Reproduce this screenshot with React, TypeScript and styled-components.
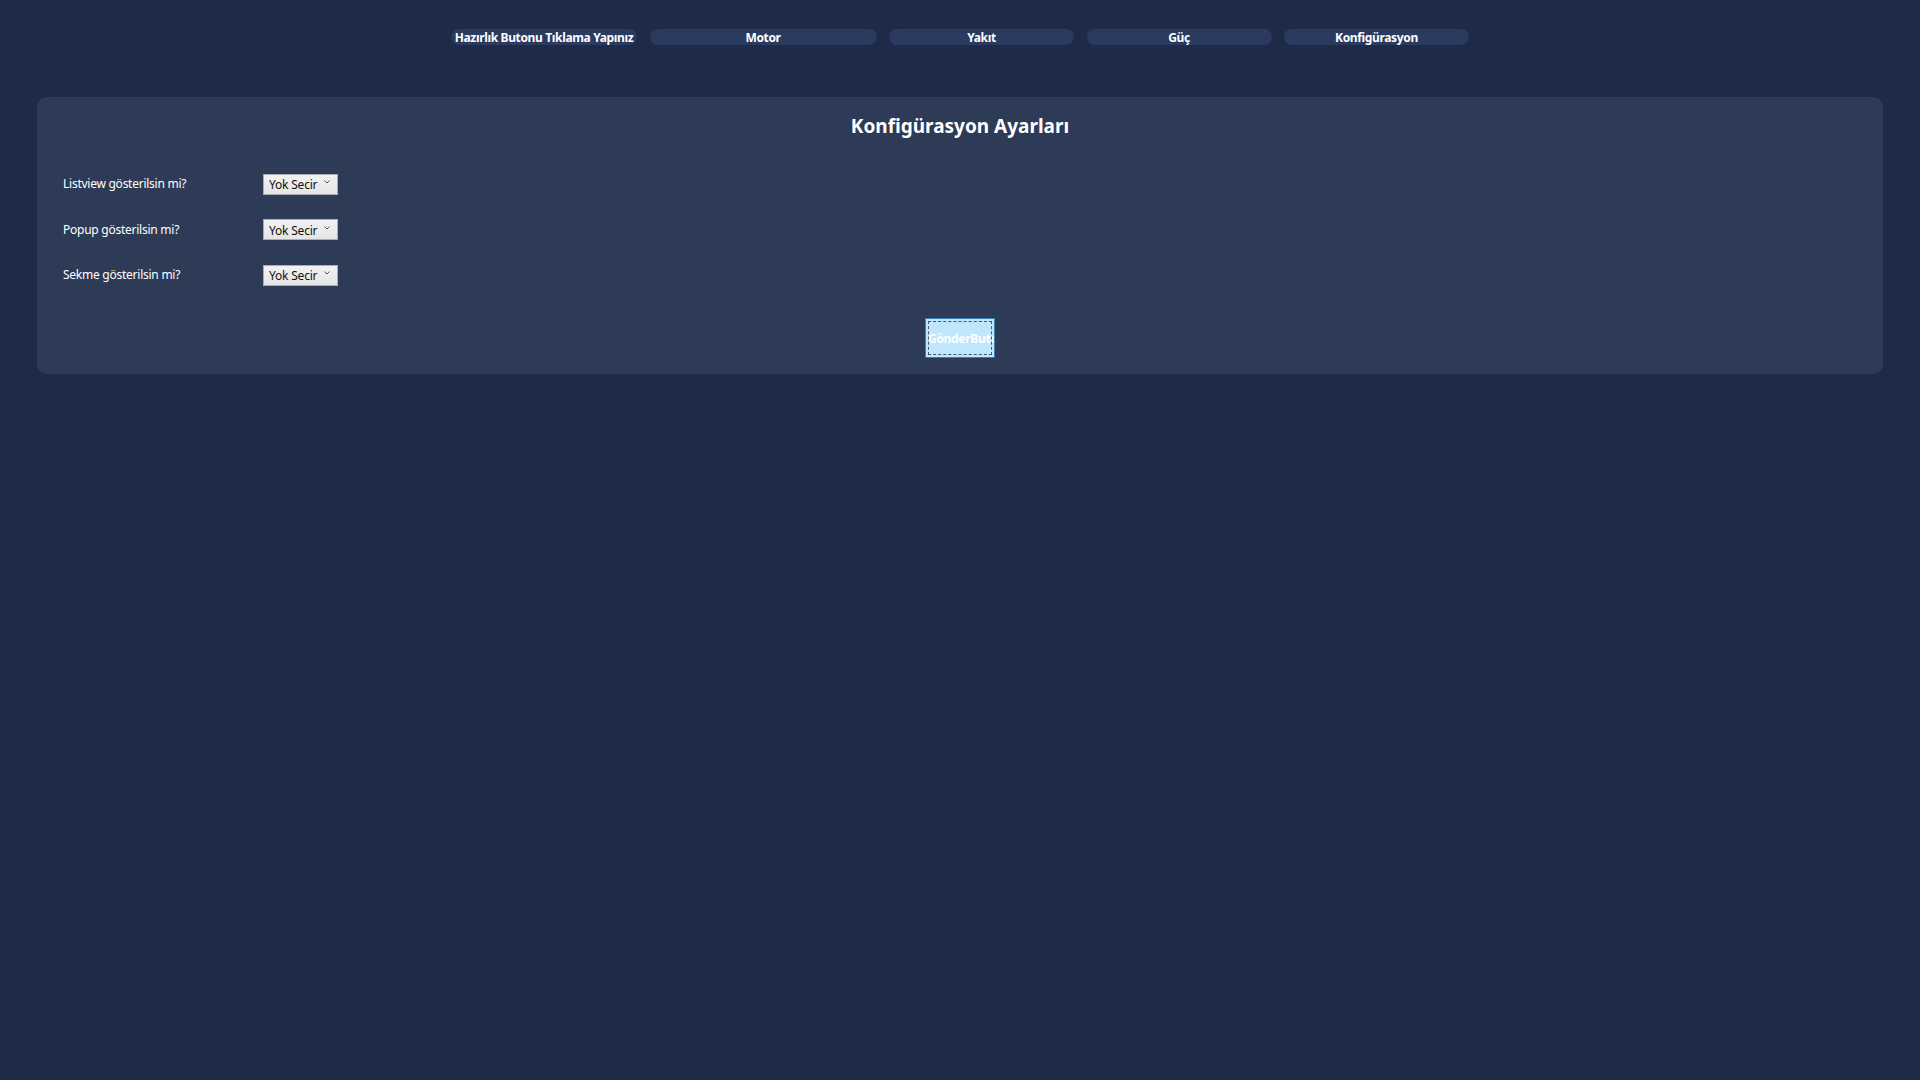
import React from "react";
import styled, { createGlobalStyle } from "styled-components";

const GlobalStyle = createGlobalStyle`
  html, body {
    margin: 0;
    padding: 0;
    background: #1f2a48;
    min-height: 100%;
  }
  body {
    font-family: "Noto Sans", "Open Sans", sans-serif;
    color: #ffffff;
    min-height: 1080px;
  }
`;

const Page = styled.div`
  min-height: 1080px;
  background: #1f2a48;
  padding: 29px 37px 0 37px;
  box-sizing: border-box;
`;

const TabBar = styled.nav`
  display: flex;
  justify-content: center;
  gap: 12.5px;
`;

const Tab = styled.button<{ $width: number }>`
  flex: none;
  width: ${({ $width }) => $width}px;
  height: 16px;
  padding: 0;
  border: none;
  border-radius: 8px;
  background: #2b3a5f;
  color: #ffffff;
  font-family: "Noto Sans", sans-serif;
  font-size: 12px;
  font-weight: 700;
  line-height: 17px;
  letter-spacing: -0.35px;
  white-space: nowrap;
  display: flex;
  justify-content: center;
  overflow: visible;
  cursor: pointer;
`;

const Panel = styled.section`
  margin-top: 52px;
  background: #2e3b56;
  border-radius: 10px;
  padding: 15px 26px 16px;
  display: flex;
  flex-direction: column;
`;

const Title = styled.h2`
  margin: 0;
  text-align: center;
  font-size: 19px;
  line-height: 28px;
  font-weight: 700;
  color: #ffffff;
`;

const Form = styled.div`
  margin-top: 32px;
  display: flex;
  flex-direction: column;
  gap: 24.5px;
`;

const Row = styled.div`
  display: flex;
  align-items: center;
  height: 21px;
`;

const Label = styled.label`
  width: 200px;
  font-size: 12px;
  line-height: 21px;
  letter-spacing: -0.25px;
  padding-top: 2px;
  color: #ffffff;
`;

const SelectWrap = styled.div`
  position: relative;
  width: 75px;
  height: 21px;
`;

const Select = styled.select`
  appearance: none;
  -webkit-appearance: none;
  width: 100%;
  height: 100%;
  box-sizing: border-box;
  margin: 0;
  padding: 1px 0 0 5px;
  border: 1px solid #acacac;
  border-radius: 0;
  background: linear-gradient(#f2f2f2, #e5e5e5);
  color: #111111;
  font-family: "Noto Sans", sans-serif;
  font-size: 12px;
  letter-spacing: -0.2px;
`;

const Chevron = styled.svg`
  position: absolute;
  right: 8px;
  top: 8px;
  width: 6px;
  height: 4px;
  pointer-events: none;
`;

const Actions = styled.div`
  margin-top: 34px;
  display: flex;
  justify-content: center;
`;

const SubmitButton = styled.button`
  width: 70px;
  height: 40px;
  box-sizing: border-box;
  padding: 0 2px;
  border: 1px solid #3c7fb1;
  background: #bee6fd;
  outline: 1px dashed #4a5568;
  outline-offset: -4px;
  color: #ffffff;
  font-family: "Noto Sans", sans-serif;
  font-size: 12px;
  font-weight: 700;
  letter-spacing: -0.3px;
  text-align: left;
  white-space: nowrap;
  overflow: hidden;
  cursor: pointer;
`;

const tabs = [
  { label: "Hazırlık Butonu Tıklama Yapınız", width: 186 },
  { label: "Motor", width: 227 },
  { label: "Yakıt", width: 185 },
  { label: "Güç", width: 185 },
  { label: "Konfigürasyon", width: 185 },
];

const settings = [
  "Listview gösterilsin mi?",
  "Popup gösterilsin mi?",
  "Sekme gösterilsin mi?",
];

export default function App() {
  return (
    <>
      <GlobalStyle />
      <Page>
        <TabBar>
          {tabs.map((t) => (
            <Tab key={t.label} $width={t.width}>
              {t.label}
            </Tab>
          ))}
        </TabBar>

        <Panel>
          <Title>Konfigürasyon Ayarları</Title>
          <Form>
            {settings.map((s) => (
              <Row key={s}>
                <Label>{s}</Label>
                <SelectWrap>
                  <Select defaultValue="yok">
                    <option value="yok">Yok Secir</option>
                    <option value="evet">Evet</option>
                    <option value="hayir">Hayır</option>
                  </Select>
                  <Chevron viewBox="0 0 6 4">
                    <path d="M0.5 0.5 L3 3 L5.5 0.5" fill="none" stroke="#555" strokeWidth="1" />
                  </Chevron>
                </SelectWrap>
              </Row>
            ))}
          </Form>
          <Actions>
            <SubmitButton>GönderButon</SubmitButton>
          </Actions>
        </Panel>
      </Page>
    </>
  );
}
